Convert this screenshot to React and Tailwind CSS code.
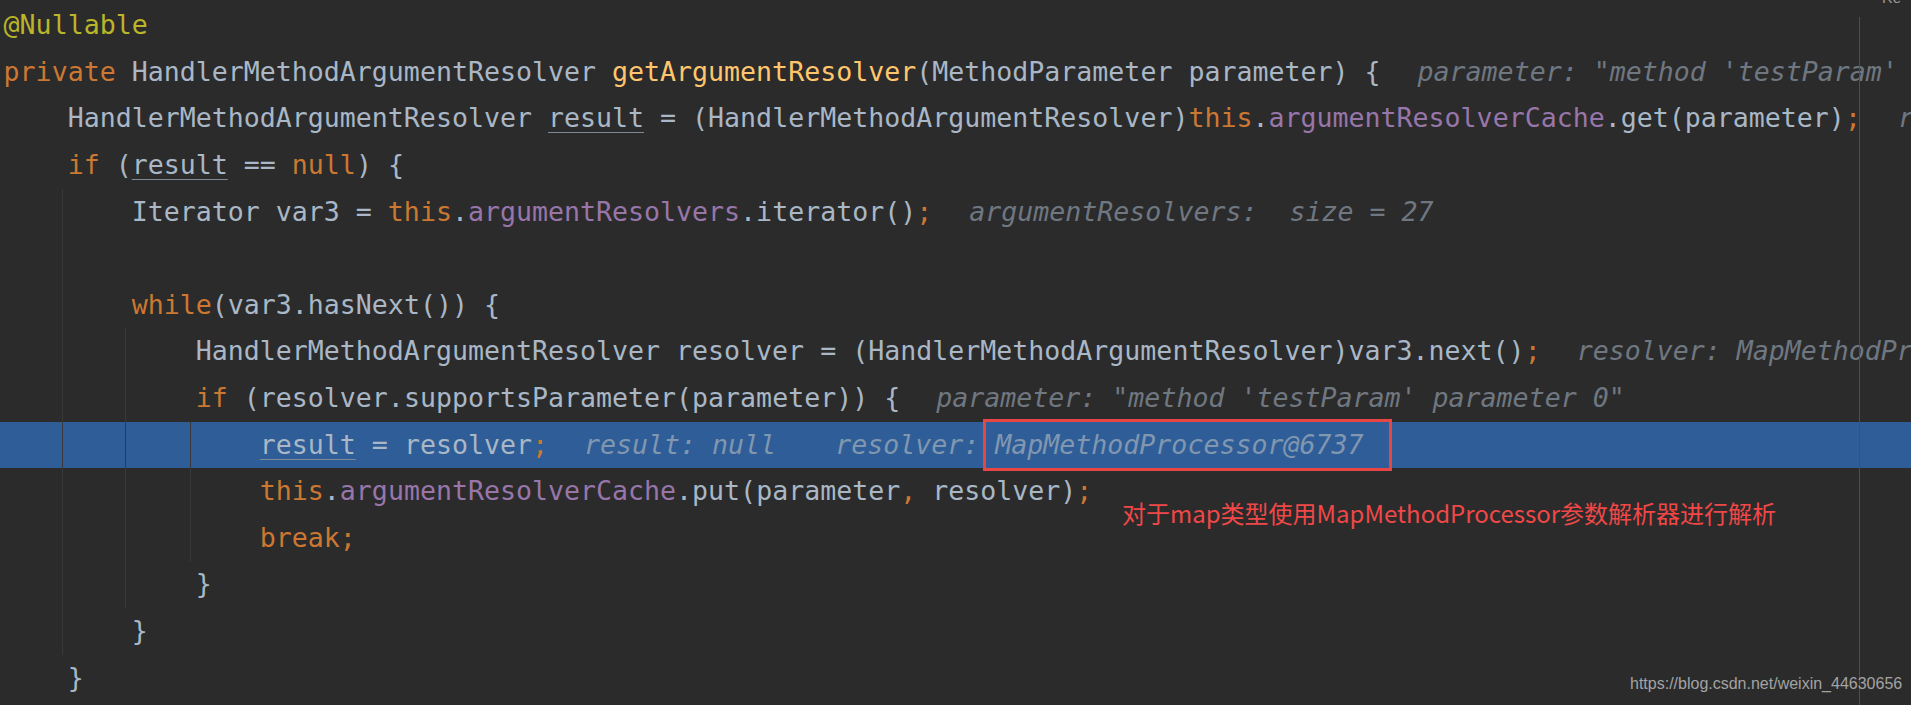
const K = ({ children }) => <span className="text-[#cc7832]">{children}</span>;
const F = ({ children }) => <span className="text-[#9876aa]">{children}</span>;
const M = ({ children }) => <span className="text-[#ffc66d]">{children}</span>;
const U = ({ children }) => (
  <span className="underline decoration-[#7d8b99] decoration-1 underline-offset-[5px]">{children}</span>
);
const H = ({ children, hi = false, className = "" }) => (
  <span className={`italic ${hi ? "text-[#8197b0]" : "text-[#6f7781]"} ${className}`}>{children}</span>
);

function Line({ children, active = false }) {
  return (
    <div
      className={`h-[46.6px] whitespace-pre pl-[3.6px] leading-[46.6px] ${active ? "bg-[#2e5d97]" : ""}`}
    >
      {children}
    </div>
  );
}

export default function App() {
  return (
    <div className="relative h-[705px] w-full overflow-hidden bg-[#2b2b2b] font-['DejaVu_Sans_Mono',monospace] text-[26.6px] text-[#a9b7c6]">
      <div className="flex flex-col pt-[2.2px]">
        <Line>
          <span className="text-[#bbb529]">@Nullable</span>
        </Line>
        <Line>
          <K>private</K> HandlerMethodArgumentResolver <M>getArgumentResolver</M>(MethodParameter parameter) {"{"}
          <H className="ml-[37px]">parameter: "method 'testParam'</H>
        </Line>
        <Line>
          {"    HandlerMethodArgumentResolver "}
          <U>result</U>
          {" = (HandlerMethodArgumentResolver)"}
          <K>this</K>.<F>argumentResolverCache</F>.get(parameter)<K>;</K>
          <H className="ml-[37px]">result: null</H>
        </Line>
        <Line>
          {"    "}
          <K>if</K> (<U>result</U> == <K>null</K>) {"{"}
        </Line>
        <Line>
          {"        Iterator var3 = "}
          <K>this</K>.<F>argumentResolvers</F>.iterator()<K>;</K>
          <H className="ml-[37px]">argumentResolvers:  size = 27</H>
        </Line>
        <Line> </Line>
        <Line>
          {"        "}
          <K>while</K>(var3.hasNext()) {"{"}
        </Line>
        <Line>
          {"            HandlerMethodArgumentResolver resolver = (HandlerMethodArgumentResolver)var3.next()"}
          <K>;</K>
          <H className="ml-[36px]">resolver: MapMethodProcessor@6737</H>
        </Line>
        <Line>
          {"            "}
          <K>if</K> (resolver.supportsParameter(parameter)) {"{"}
          <H className="ml-[36px]">parameter: "method 'testParam' parameter 0"</H>
        </Line>
        <Line active>
          {"                "}
          <U>result</U> = resolver<K>;</K>
          <H hi className="ml-[36px]">result: null</H>
          <H hi className="ml-[59px]">resolver: MapMethodProcessor@6737</H>
        </Line>
        <Line>
          {"                "}
          <K>this</K>.<F>argumentResolverCache</F>.put(parameter<K>,</K> resolver)<K>;</K>
        </Line>
        <Line>
          {"                "}
          <K>break;</K>
        </Line>
        <Line>{"            }"}</Line>
        <Line>{"        }"}</Line>
        <Line>{"    }"}</Line>
      </div>

      {/* indent guides */}
      <div className="absolute left-[62px] top-[188.6px] h-[466px] w-px bg-[#393939]" />
      <div className="absolute left-[125px] top-[328.4px] h-[280px] w-px bg-[#393939]" />
      <div className="absolute left-[190px] top-[421.6px] h-[140px] w-px bg-[#393939]" />

      {/* right margin */}
      <div className="absolute bottom-0 left-[1859px] top-[17px] w-px bg-[#4e4e4e]" />
      <span className="absolute left-[1882px] top-[-13px] font-['Liberation_Sans',sans-serif] text-[15px] text-[#9a9a9a]">
        Re
      </span>

      {/* annotation */}
      <div className="absolute left-[983px] top-[419px] h-[52px] w-[409px] border-[3px] border-[#e84545]" />
      <div className="absolute left-[1122px] top-[498px] font-['Noto_Sans_CJK_SC',sans-serif] text-[24px] leading-[30px] text-[#f04848]">
        对于map类型使用MapMethodProcessor参数解析器进行解析
      </div>

      <div className="absolute left-[1630px] top-[673px] font-['Liberation_Sans',sans-serif] text-[16px] leading-[22px] text-[#a3a3a3]">
        https://blog.csdn.net/weixin_44630656
      </div>
    </div>
  );
}
